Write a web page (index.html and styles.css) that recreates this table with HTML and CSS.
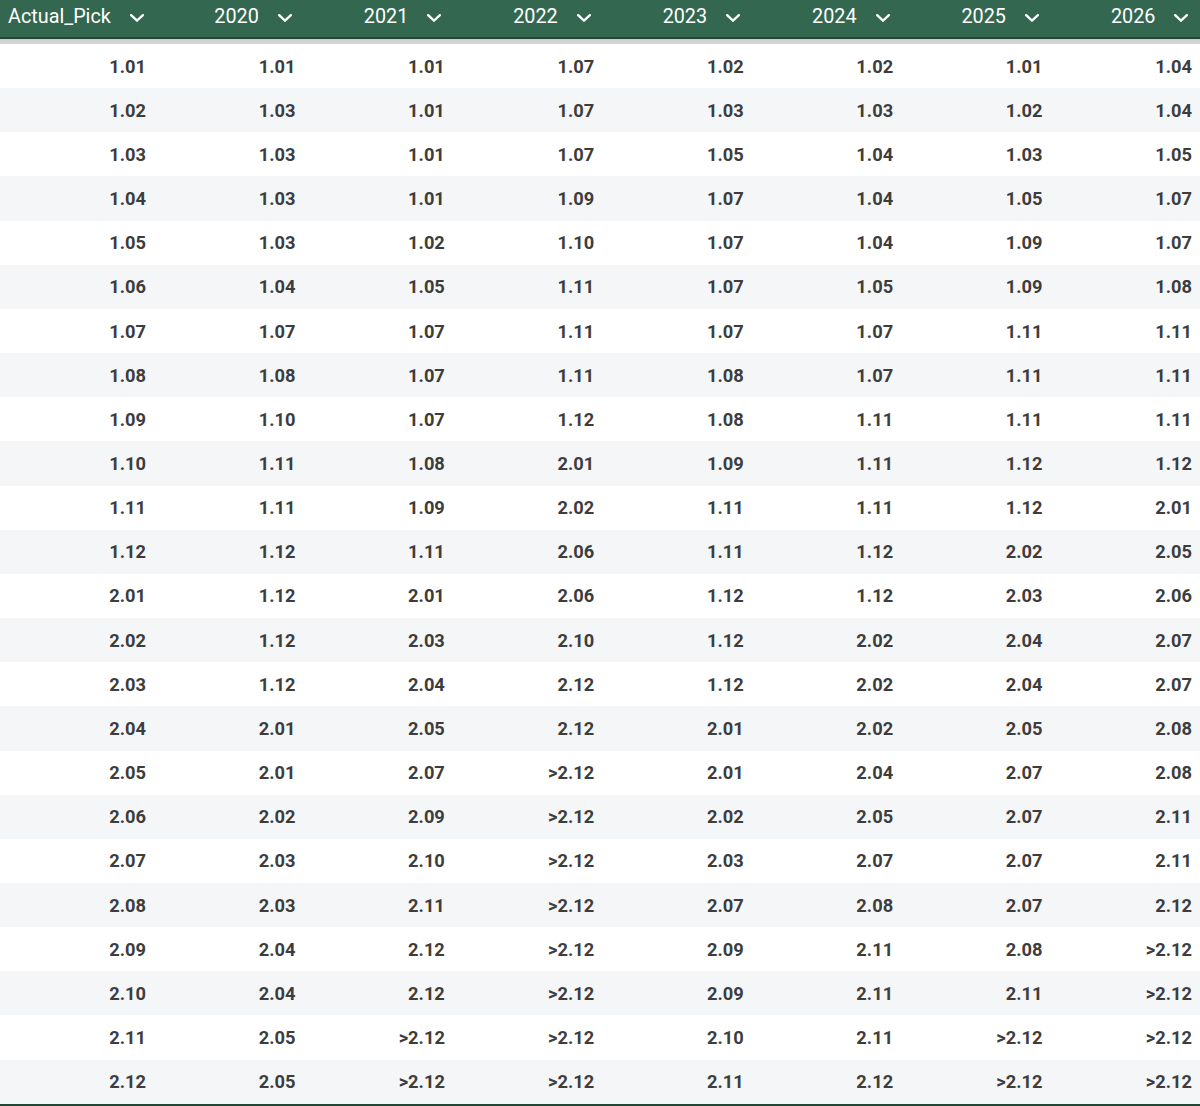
FILE: index.html
```html
<!DOCTYPE html>
<html>
<head>
<meta charset="utf-8">
<link rel="stylesheet" href="styles.css">
</head>
<body>
<div class="table">
  <div class="head">
    <div class="hcell first"><span>Actual_Pick</span><svg class="chev" viewBox="0 0 14 8"><path d="M1.2 1.2 L7 6.6 L12.8 1.2"/></svg></div>
    <div class="hcell"><span>2020</span><svg class="chev" viewBox="0 0 14 8"><path d="M1.2 1.2 L7 6.6 L12.8 1.2"/></svg></div>
    <div class="hcell"><span>2021</span><svg class="chev" viewBox="0 0 14 8"><path d="M1.2 1.2 L7 6.6 L12.8 1.2"/></svg></div>
    <div class="hcell"><span>2022</span><svg class="chev" viewBox="0 0 14 8"><path d="M1.2 1.2 L7 6.6 L12.8 1.2"/></svg></div>
    <div class="hcell"><span>2023</span><svg class="chev" viewBox="0 0 14 8"><path d="M1.2 1.2 L7 6.6 L12.8 1.2"/></svg></div>
    <div class="hcell"><span>2024</span><svg class="chev" viewBox="0 0 14 8"><path d="M1.2 1.2 L7 6.6 L12.8 1.2"/></svg></div>
    <div class="hcell"><span>2025</span><svg class="chev" viewBox="0 0 14 8"><path d="M1.2 1.2 L7 6.6 L12.8 1.2"/></svg></div>
    <div class="hcell"><span>2026</span><svg class="chev" viewBox="0 0 14 8"><path d="M1.2 1.2 L7 6.6 L12.8 1.2"/></svg></div>
  </div>
  <div class="shade"></div>
  <div class="body">
    <div class="row"><div>1.01</div><div>1.01</div><div>1.01</div><div>1.07</div><div>1.02</div><div>1.02</div><div>1.01</div><div>1.04</div></div>
    <div class="row"><div>1.02</div><div>1.03</div><div>1.01</div><div>1.07</div><div>1.03</div><div>1.03</div><div>1.02</div><div>1.04</div></div>
    <div class="row"><div>1.03</div><div>1.03</div><div>1.01</div><div>1.07</div><div>1.05</div><div>1.04</div><div>1.03</div><div>1.05</div></div>
    <div class="row"><div>1.04</div><div>1.03</div><div>1.01</div><div>1.09</div><div>1.07</div><div>1.04</div><div>1.05</div><div>1.07</div></div>
    <div class="row"><div>1.05</div><div>1.03</div><div>1.02</div><div>1.10</div><div>1.07</div><div>1.04</div><div>1.09</div><div>1.07</div></div>
    <div class="row"><div>1.06</div><div>1.04</div><div>1.05</div><div>1.11</div><div>1.07</div><div>1.05</div><div>1.09</div><div>1.08</div></div>
    <div class="row"><div>1.07</div><div>1.07</div><div>1.07</div><div>1.11</div><div>1.07</div><div>1.07</div><div>1.11</div><div>1.11</div></div>
    <div class="row"><div>1.08</div><div>1.08</div><div>1.07</div><div>1.11</div><div>1.08</div><div>1.07</div><div>1.11</div><div>1.11</div></div>
    <div class="row"><div>1.09</div><div>1.10</div><div>1.07</div><div>1.12</div><div>1.08</div><div>1.11</div><div>1.11</div><div>1.11</div></div>
    <div class="row"><div>1.10</div><div>1.11</div><div>1.08</div><div>2.01</div><div>1.09</div><div>1.11</div><div>1.12</div><div>1.12</div></div>
    <div class="row"><div>1.11</div><div>1.11</div><div>1.09</div><div>2.02</div><div>1.11</div><div>1.11</div><div>1.12</div><div>2.01</div></div>
    <div class="row"><div>1.12</div><div>1.12</div><div>1.11</div><div>2.06</div><div>1.11</div><div>1.12</div><div>2.02</div><div>2.05</div></div>
    <div class="row"><div>2.01</div><div>1.12</div><div>2.01</div><div>2.06</div><div>1.12</div><div>1.12</div><div>2.03</div><div>2.06</div></div>
    <div class="row"><div>2.02</div><div>1.12</div><div>2.03</div><div>2.10</div><div>1.12</div><div>2.02</div><div>2.04</div><div>2.07</div></div>
    <div class="row"><div>2.03</div><div>1.12</div><div>2.04</div><div>2.12</div><div>1.12</div><div>2.02</div><div>2.04</div><div>2.07</div></div>
    <div class="row"><div>2.04</div><div>2.01</div><div>2.05</div><div>2.12</div><div>2.01</div><div>2.02</div><div>2.05</div><div>2.08</div></div>
    <div class="row"><div>2.05</div><div>2.01</div><div>2.07</div><div>&gt;2.12</div><div>2.01</div><div>2.04</div><div>2.07</div><div>2.08</div></div>
    <div class="row"><div>2.06</div><div>2.02</div><div>2.09</div><div>&gt;2.12</div><div>2.02</div><div>2.05</div><div>2.07</div><div>2.11</div></div>
    <div class="row"><div>2.07</div><div>2.03</div><div>2.10</div><div>&gt;2.12</div><div>2.03</div><div>2.07</div><div>2.07</div><div>2.11</div></div>
    <div class="row"><div>2.08</div><div>2.03</div><div>2.11</div><div>&gt;2.12</div><div>2.07</div><div>2.08</div><div>2.07</div><div>2.12</div></div>
    <div class="row"><div>2.09</div><div>2.04</div><div>2.12</div><div>&gt;2.12</div><div>2.09</div><div>2.11</div><div>2.08</div><div>&gt;2.12</div></div>
    <div class="row"><div>2.10</div><div>2.04</div><div>2.12</div><div>&gt;2.12</div><div>2.09</div><div>2.11</div><div>2.11</div><div>&gt;2.12</div></div>
    <div class="row"><div>2.11</div><div>2.05</div><div>&gt;2.12</div><div>&gt;2.12</div><div>2.10</div><div>2.11</div><div>&gt;2.12</div><div>&gt;2.12</div></div>
    <div class="row"><div>2.12</div><div>2.05</div><div>&gt;2.12</div><div>&gt;2.12</div><div>2.11</div><div>2.12</div><div>&gt;2.12</div><div>&gt;2.12</div></div>
  </div>
</div>
</body>
</html>
```
FILE: styles.css
```css
html, body {
  margin: 0;
  padding: 0;
  background: #ffffff;
}
body {
  font-family: Roboto, "Liberation Sans", sans-serif;
  width: 1200px;
  height: 1106px;
  overflow: hidden;
}
.table {
  width: 1200px;
}
.head {
  height: 37px;
  background: #33674f;
  border-bottom: 2px solid #1f4736;
  display: grid;
  grid-template-columns: repeat(8, 149.43px);
  padding-right: 4.6px;
  color: #ffffff;
  font-size: 19.8px;
}
.hcell {
  display: flex;
  align-items: center;
  justify-content: flex-end;
  gap: 19px;
  padding-right: 7px;
  padding-bottom: 5px;
}
.hcell.first {
  justify-content: space-between;
  padding-left: 8px;
}
.chev {
  width: 14px;
  height: 8px;
  flex: none;
  margin-top: 4px;
}
.chev path {
  fill: none;
  stroke: #ffffff;
  stroke-width: 2.3;
  stroke-linecap: square;
}
.shade {
  height: 5px;
  background: linear-gradient(#cdcdcd, #d6d6d6);
}
.body {
  border-bottom: 2px solid #1f4736;
}
.row {
  height: 44.17px;
  display: grid;
  grid-template-columns: repeat(8, 149.43px);
  padding-right: 4.6px;
  align-items: center;
  font-size: 18.3px;
  font-weight: 700;
  color: #3d3d3d;
}
.row:nth-child(even) {
  background: #f5f6f8;
}
.row > div {
  text-align: right;
  padding-right: 3.4px;
}
```
